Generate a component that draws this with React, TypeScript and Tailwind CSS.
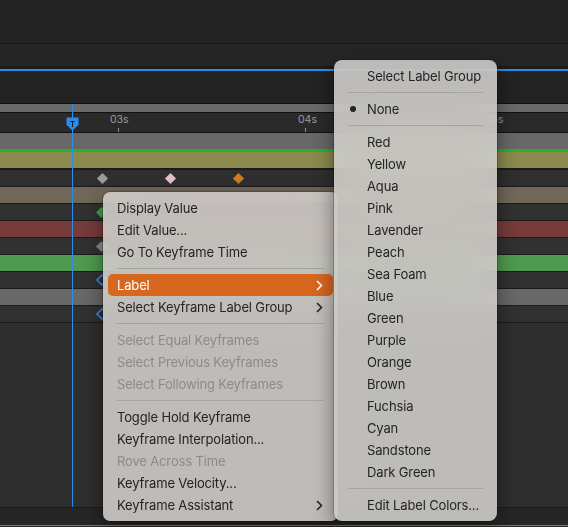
import React from "react";

type Item = { label: string; disabled?: boolean; sub?: boolean; active?: boolean } | "sep";

const mainItems: Item[] = [
  { label: "Display Value" },
  { label: "Edit Value..." },
  { label: "Go To Keyframe Time" },
  "sep",
  { label: "Label", sub: true, active: true },
  { label: "Select Keyframe Label Group", sub: true },
  "sep",
  { label: "Select Equal Keyframes", disabled: true },
  { label: "Select Previous Keyframes", disabled: true },
  { label: "Select Following Keyframes", disabled: true },
  "sep",
  { label: "Toggle Hold Keyframe" },
  { label: "Keyframe Interpolation..." },
  { label: "Rove Across Time", disabled: true },
  { label: "Keyframe Velocity..." },
  { label: "Keyframe Assistant", sub: true },
];

const colors = [
  "Red",
  "Yellow",
  "Aqua",
  "Pink",
  "Lavender",
  "Peach",
  "Sea Foam",
  "Blue",
  "Green",
  "Purple",
  "Orange",
  "Brown",
  "Fuchsia",
  "Cyan",
  "Sandstone",
  "Dark Green",
];

function Chevron({ white }: { white?: boolean }) {
  return (
    <svg width="7" height="11" viewBox="0 0 7 11" className="shrink-0">
      <path
        d="M1.5 1.5 L5.5 5.5 L1.5 9.5"
        fill="none"
        stroke={white ? "#ffffff" : "#262626"}
        strokeWidth="1.7"
        strokeLinecap="round"
        strokeLinejoin="round"
      />
    </svg>
  );
}

function Diamond({ x, color, size = 8 }: { x: number; color: string; size?: number }) {
  return (
    <div
      className="absolute top-1/2"
      style={{ left: x - size / 2, marginTop: -size / 2, width: size, height: size }}
    >
      <div className="w-full h-full rotate-45 scale-[0.72]" style={{ background: color }} />
    </div>
  );
}

function OutlineDiamond({ x }: { x: number }) {
  return (
    <svg
      className="absolute top-1/2 -mt-[6px]"
      style={{ left: x - 6 }}
      width="12"
      height="12"
      viewBox="0 0 12 12"
    >
      <path d="M6 1 L11 6 L6 11 L1 6 Z" fill="none" stroke="#3a8ae0" strokeWidth="1.6" />
    </svg>
  );
}

export default function App() {
  return (
    <div
      className="relative w-[568px] h-[527px] overflow-hidden bg-[#2e2e2e]"
      style={{ fontFamily: "Inter, 'Liberation Sans', sans-serif" }}
    >
      {/* background timeline */}
      <div className="flex flex-col">
        <div className="h-[43px] bg-[#232323]" />
        <div className="h-px bg-[#191919]" />
        <div className="h-[22px] bg-[#262626]" />
        <div className="h-[3px] bg-[#1c1c1c]" />
        <div className="h-[2px] bg-[#2d8ceb]" />
        <div className="h-[32px] bg-[#232323]" />
        <div className="h-px bg-[#111111]" />
        <div className="h-[8px] bg-[#6a6a6a]" />
        <div className="h-px bg-[#111111]" />
        <div className="relative h-[19px] bg-[#2a2a2a] text-[10.5px] text-[#9a9a9a]">
          <span className="absolute left-[110px] top-[2px] leading-none">03s</span>
          <div className="absolute left-[118px] bottom-0 w-px h-[4px] bg-[#8a8a8a]" />
          <span className="absolute left-[298px] top-[2px] leading-none">04s</span>
          <div className="absolute left-[305px] bottom-0 w-px h-[4px] bg-[#8a8a8a]" />
          <span className="absolute left-[485px] top-[2px] leading-none">05s</span>
          <div className="absolute left-[492px] bottom-0 w-px h-[4px] bg-[#8a8a8a]" />
        </div>
        <div className="h-px bg-[#111111]" />
        <div className="h-[16px] bg-[#676767]" />
        <div className="h-[3px] bg-[#26b426]" />
        <div className="h-[16px] bg-[#8c894d]" />
        <div className="h-[2px] bg-[#1b1b1b]" />
        <div className="relative h-[16px] bg-[#2f2f2f]">
          <Diamond x={102} color="#9a9a9a" size={11} />
          <Diamond x={170} color="#e6bccb" size={11} />
          <Diamond x={238} color="#d27a1e" size={11} />
        </div>
        <div className="h-px bg-[#1b1b1b]" />
        <div className="h-[16px] bg-[#716859]" />
        <div className="h-px bg-[#1b1b1b]" />
        <div className="relative h-[16px] bg-[#313131]">
          <Diamond x={101} color="#4c9a4c" size={11} />
        </div>
        <div className="h-px bg-[#1b1b1b]" />
        <div className="h-[16px] bg-[#763b3b]" />
        <div className="h-px bg-[#1b1b1b]" />
        <div className="relative h-[16px] bg-[#313131]">
          <Diamond x={101} color="#8a8a8a" size={11} />
        </div>
        <div className="h-px bg-[#1b1b1b]" />
        <div className="h-[16px] bg-[#4f9a4f]" />
        <div className="h-px bg-[#1b1b1b]" />
        <div className="relative h-[16px] bg-[#313131]">
          <OutlineDiamond x={102} />
        </div>
        <div className="h-px bg-[#1b1b1b]" />
        <div className="h-[16px] bg-[#686868]" />
        <div className="h-px bg-[#1b1b1b]" />
        <div className="relative h-[16px] bg-[#313131]">
          <OutlineDiamond x={102} />
        </div>
        <div className="h-px bg-[#1b1b1b]" />
        <div className="h-[184px] bg-[#2e2e2e]" />
        <div className="h-px bg-[#1a1a1a]" />
        <div className="h-[17px] bg-[#262626]" />
        <div className="h-px bg-[#2d8ceb]" />
        <div className="h-px bg-[#262626]" />
      </div>

      {/* playhead */}
      <div className="absolute left-[72px] top-[104px] w-px h-[403px] bg-[#2d8ceb]" />
      <svg className="absolute left-[66px] top-[117px]" width="13" height="14" viewBox="0 0 13 14">
        <path d="M0.5 0.5 H12.5 V8 L6.5 13.5 L0.5 8 Z" fill="#2d8ceb" />
        <path d="M4.5 4.5 H8.5 M6.5 4.5 V10" stroke="#1a1a1a" strokeWidth="1" />
      </svg>

      {/* main context menu */}
      <div className="absolute left-[103px] top-[192px] w-[235px] rounded-[7px] p-[5px] bg-[rgba(214,211,207,0.86)] backdrop-blur-xl shadow-[0_0_0_1px_rgba(0,0,0,0.18),0_6px_20px_rgba(0,0,0,0.45)] text-[13px] tracking-[-0.15px]">
        {mainItems.map((it, i) =>
          it === "sep" ? (
            <div key={i} className="h-[11px] flex items-center px-[9px]">
              <div className="h-px w-full bg-[#a6a4a1]" />
            </div>
          ) : (
            <div
              key={i}
              className={
                "h-[22px] flex items-center justify-between pl-[9px] pr-[10px] rounded-[5px] " +
                (it.active
                  ? "bg-[#d6671f] text-white"
                  : it.disabled
                  ? "text-[#8d8b88]"
                  : "text-[#242424]")
              }
            >
              <span className="relative top-px">{it.label}</span>
              {it.sub && <Chevron white={it.active} />}
            </div>
          )
        )}
      </div>

      {/* label submenu */}
      <div className="absolute left-[334px] top-[60px] w-[163px] rounded-[8px] p-[5px] bg-[rgba(214,212,208,0.86)] backdrop-blur-xl shadow-[0_0_0_1px_rgba(0,0,0,0.2),0_6px_20px_rgba(0,0,0,0.45)] text-[13px] tracking-[-0.15px] text-[#242424]">
        <div className="h-[22px] flex items-center pl-[28px]">
          <span className="relative top-px">Select Label Group</span>
        </div>
        <div className="h-[11px] flex items-center px-[9px]">
          <div className="h-px w-full bg-[#a6a4a1]" />
        </div>
        <div className="relative h-[22px] flex items-center pl-[28px]">
          <div className="absolute left-[11px] top-[8px] w-[6px] h-[6px] rounded-full bg-[#242424]" />
          <span className="relative top-px">None</span>
        </div>
        <div className="h-[11px] flex items-center px-[9px]">
          <div className="h-px w-full bg-[#a6a4a1]" />
        </div>
        {colors.map((c) => (
          <div key={c} className="h-[22px] flex items-center pl-[28px]">
            <span className="relative top-px">{c}</span>
          </div>
        ))}
        <div className="h-[11px] flex items-center px-[9px]">
          <div className="h-px w-full bg-[#a6a4a1]" />
        </div>
        <div className="h-[22px] flex items-center pl-[28px]">
          <span className="relative top-px">Edit Label Colors...</span>
        </div>
      </div>
    </div>
  );
}
